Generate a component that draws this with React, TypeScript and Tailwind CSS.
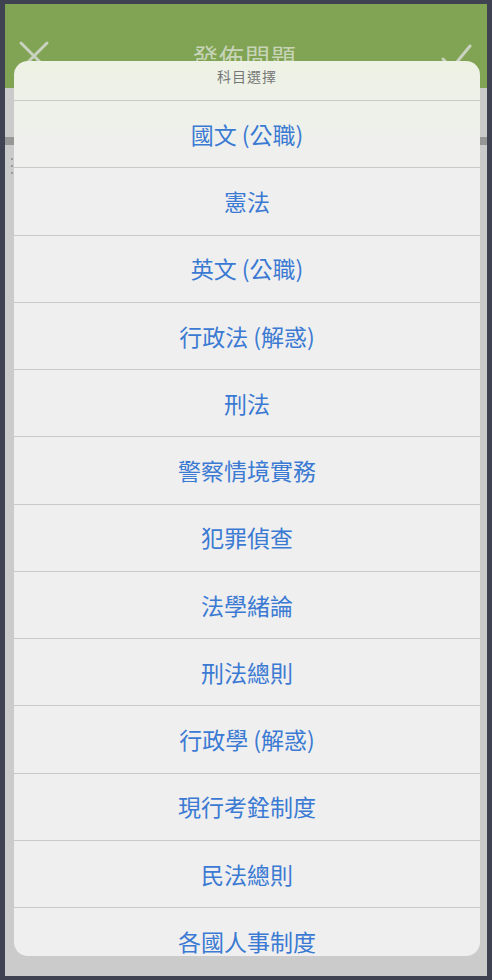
const subjects = [
  "國文 (公職)",
  "憲法",
  "英文 (公職)",
  "行政法 (解惑)",
  "刑法",
  "警察情境實務",
  "犯罪偵查",
  "法學緒論",
  "刑法總則",
  "行政學 (解惑)",
  "現行考銓制度",
  "民法總則",
  "各國人事制度",
];

export default function App() {
  return (
    <div
      className="w-[492px] h-[980px] bg-[#3f4250] pt-[4px] pb-[4px] px-[5px]"
      style={{ fontFamily: '"Noto Sans CJK TC", "Noto Sans", sans-serif' }}
    >
      <div className="relative w-full h-full bg-[#cbcbcb] overflow-hidden">
        {/* header (dimmed) */}
        <div className="h-[84px] bg-[#80a453] flex items-start justify-between px-[13px] pt-[36px]">
          <svg width="32" height="32" viewBox="0 0 32 32" className="shrink-0">
            <path d="M3 3 L29 29 M29 3 L3 29" stroke="#c9d1c0" strokeWidth="3" strokeLinecap="round" />
          </svg>
          <div className="text-[25px] leading-[32px] text-[#c8d4b8] tracking-[1px]">發佈問題</div>
          <svg width="32" height="32" viewBox="0 0 32 32" className="shrink-0 mr-[2px]">
            <path d="M3 19 L12 28 L30 6" stroke="#c9d1c0" strokeWidth="3" fill="none" strokeLinecap="round" strokeLinejoin="round" />
          </svg>
        </div>
        <div className="h-[49px]" />
        <div className="h-[8px] bg-[#979797]" />
        <div className="pl-[6px] pt-[13px] flex flex-col gap-[5px]">
          <div className="w-[2px] h-[2px] bg-[#9a9a9a]" />
          <div className="w-[2px] h-[2px] bg-[#9a9a9a]" />
          <div className="w-[2px] h-[2px] bg-[#9a9a9a]" />
        </div>

        {/* action sheet */}
        <div className="absolute left-[9px] right-[7px] top-[57px] h-[895px] rounded-[14px] overflow-hidden bg-gradient-to-b from-[#edf2e4] via-[#efefef] via-[12%] to-[#efefef]">
          <div className="h-[39px] pt-[5px] text-center text-[14px] leading-[20px] text-[#777777] tracking-[1px]">
            科目選擇
          </div>
          {subjects.map((s) => (
            <div
              key={s}
              className="h-[67.25px] shrink-0 border-t border-[#c9c9c9] flex items-center justify-center text-[23px] text-[#3b7ad3]"
            >
              {s}
            </div>
          ))}
        </div>
      </div>
    </div>
  );
}
